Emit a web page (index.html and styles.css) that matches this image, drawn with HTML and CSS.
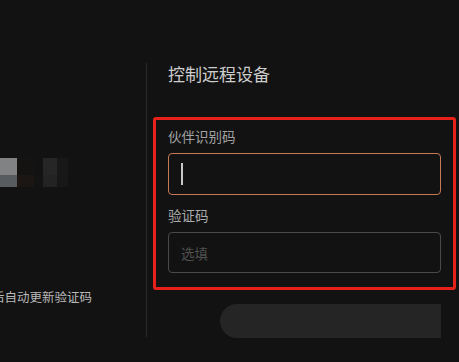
FILE: index.html
```html
<!DOCTYPE html>
<html lang="zh-CN">
<head>
<meta charset="utf-8">
<link rel="stylesheet" href="styles.css">
</head>
<body>
<div class="page">
  <div class="left">
    <div class="mosaic">
      <div class="tile t1"></div><div class="tile t2"></div><div class="tile t3"></div><div class="tile t4"></div><div class="tile t5"></div>
      <div class="tile t6"></div><div class="tile t7"></div><div class="tile t8"></div><div class="tile t9"></div><div class="tile t10"></div>
    </div>
    <div class="hint">后自动更新验证码</div>
  </div>
  <div class="divider"></div>
  <div class="right">
    <div class="title">控制远程设备</div>
    <div class="highlight">
      <div class="label">伙伴识别码</div>
      <div class="field focused"><span class="caret"></span></div>
      <div class="label second">验证码</div>
      <div class="field"><span class="placeholder">选填</span></div>
    </div>
    <div class="button-row"><div class="button"></div></div>
  </div>
</div>
</body>
</html>
```

FILE: styles.css
```css
html, body {
  margin: 0;
  padding: 0;
  background: #121212;
}
.page {
  width: 459px;
  height: 362px;
  overflow: hidden;
  display: flex;
  font-family: "Noto Sans CJK SC", "Noto Sans", sans-serif;
}
.left {
  width: 146px;
  flex: none;
  overflow: hidden;
  padding-top: 158px;
  box-sizing: border-box;
}
.mosaic {
  display: grid;
  grid-template-columns: 17px 17px 9px 14px 11px;
  grid-template-rows: 17px 12px;
}
.t1 { background: #818283; }
.t2 { background: #151212; }
.t3 { background: #121212; }
.t4 { background: #262626; }
.t5 { background: #181818; }
.t6 { background: #575c60; }
.t7 { background: #1b1514; }
.t8 { background: #131313; }
.t9 { background: #232323; }
.t10 { background: #171717; }
.hint {
  margin-top: 101px;
  margin-left: -8px;
  font-size: 12.5px;
  line-height: 18px;
  color: #b8b8b8;
  white-space: nowrap;
}
.divider {
  width: 1px;
  flex: none;
  margin-top: 63px;
  height: 274px;
  background: #2a2a2a;
}
.right {
  flex: 1;
  padding-top: 62px;
  padding-left: 6px;
}
.title {
  margin-left: 15px;
  font-size: 17px;
  line-height: 24px;
  color: #cdcdcd;
  margin-bottom: 31px;
}
.highlight {
  width: 303px;
  box-sizing: border-box;
  border: 3px solid #e8201a;
  border-radius: 3px;
  padding: 7px 12px 14px 12px;
}
.label {
  font-size: 13.5px;
  line-height: 19px;
  color: #a2a2a2;
}
.label.second {
  margin-top: 11px;
  color: #ababab;
}
.field {
  margin-top: 7px;
  height: 41px;
  box-sizing: border-box;
  border: 1px solid #4a4a4a;
  border-radius: 4px;
  padding-left: 12px;
  display: flex;
  align-items: center;
}
.field.focused {
  height: 42px;
  border-color: #c57a55;
}
.caret {
  width: 2px;
  height: 22px;
  background: #c8c8c8;
}
.placeholder {
  font-size: 13.5px;
  color: #505050;
}
.button-row {
  margin-top: 14px;
  padding-left: 67px;
}
.button {
  width: 221px;
  height: 34px;
  background: #252525;
  border-radius: 17px 0 0 17px;
}
```
